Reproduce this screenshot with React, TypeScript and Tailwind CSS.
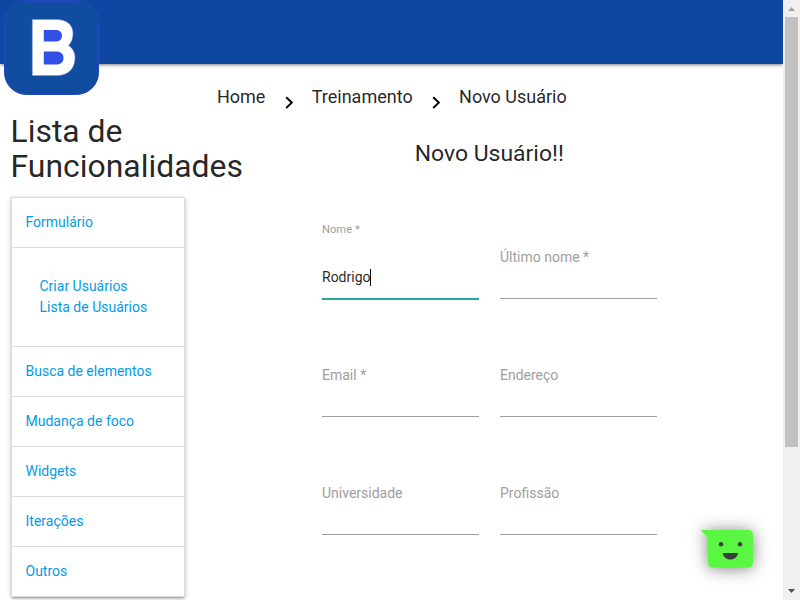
import React from 'react';

const crumbs = ['Home', 'Treinamento', 'Novo Usuário'];
const sections = ['Busca de elementos', 'Mudança de foco', 'Widgets', 'Iterações', 'Outros'];
const fields = ['Último nome *', 'Email *', 'Endereço', 'Universidade', 'Profissão'];

function Logo() {
  return (
    <svg className="absolute left-1 top-0 h-[95px] w-[95px]" viewBox="0 0 95 95">
      <rect x="0.5" y="0.5" width="94" height="94" rx="22" fill="#104ca0" stroke="#2048c4" />
      <path
        fill="#fff"
        stroke="#7f8ce8"
        strokeWidth="0.5"
        d="M28.300 19.500H52C63 19.500 69 25 69 33.500C69 39 67 43 64.500 45.500C68.500 48 71 52 71 57.500C71 69 64 75.500 53 75.500H28.300Z"
      />
      <path fill="#3150e4" d="M39.800 30H51C55.500 30 58 32 58 35.700C58 39.500 55.500 41.500 51 41.500H39.800Z M39.800 51.500H52C57 51.500 59.500 54 59.500 58C59.500 62 57 64.500 52 64.500H39.800Z" />
    </svg>
  );
}

function Header() {
  return (
    <header className="relative z-10 h-16 shrink-0 bg-[#0d47a1] shadow-[0_2px_2px_0_rgba(0,0,0,0.14),0_3px_1px_-2px_rgba(0,0,0,0.12),0_1px_5px_0_rgba(0,0,0,0.2)]">
      <Logo />
    </header>
  );
}

function Sidebar() {
  return (
    <aside className="w-[217px] shrink-0 pl-[10.500px] pt-[50px]">
      <h4 className="w-[240px] text-[31.920px] leading-[35.110px]">
        Lista de
        <br />
        Funcionalidades
      </h4>
      <ul className="mt-[13px] w-[174px] border border-b-0 border-[#ddd] bg-white leading-[21px] text-[#039be5] shadow-[0_2px_2px_0_rgba(0,0,0,0.14),0_3px_1px_-2px_rgba(0,0,0,0.12),0_1px_5px_0_rgba(0,0,0,0.2)]">
        <li className="h-[50px] border-b border-[#ddd] px-[14px] pt-[14px]">Formulário</li>
        <li className="h-[99px] border-b border-[#ddd] px-7 pt-7">
          <div>Criar Usuários</div>
          <div>Lista de Usuários</div>
        </li>
        {sections.map((name) => (
          <li key={name} className="h-[50px] border-b border-[#ddd] px-[14px] pt-[14px]">
            {name}
          </li>
        ))}
      </ul>
    </aside>
  );
}

function Breadcrumbs() {
  return (
    <nav className="-ml-[0.100px] flex h-[27px] items-center text-[18px] leading-[27px]">
      {crumbs.map((name, i) => (
        <React.Fragment key={name}>
          {i > 0 && (
            <svg className="ml-[19.800px] mr-[17.600px] mt-[12px] h-[13px] w-[9px]" viewBox="0 0 9 13" fill="none" stroke="#000" strokeWidth="2">
              <path d="M1.200 1.200L6.800 6.600L1.200 12" />
            </svg>
          )}
          <span>{name}</span>
        </React.Fragment>
      ))}
    </nav>
  );
}

function NameField() {
  return (
    <div className="h-[118px]">
      <div className="h-[21px] pt-px text-[11.200px] leading-[17px] text-[#9e9e9e]">Nome *</div>
      <div className="flex h-[59px] items-center border-b-2 border-[#26a69a] pt-[16px] text-[14px]">
        <span>Rodrigo</span>
        <span className="-ml-[0.600px] h-[17px] w-px bg-black" />
      </div>
    </div>
  );
}

function EmptyField({ label }: { label: string }) {
  return (
    <div className="h-[118px]">
      <div className="h-[79px] border-b border-[#9e9e9e] pt-[27px] leading-[21px] text-[#9e9e9e]">{label}</div>
    </div>
  );
}

function ChatBubble() {
  return (
    <svg
      className="absolute left-[701px] top-[529px] h-[40px] w-[53px] overflow-visible drop-shadow-[0_1px_8px_rgba(0,0,0,0.5)]"
      viewBox="0 0 53 40"
    >
      <path fill="#5af742" d="M-0.500 1H47C50 1 52 3 52 6V33.500C52 36.500 50 38.500 47 38.500H12C9 38.500 7 36.500 7 33.500V9Z" />
      <circle cx="20" cy="15.300" r="2.200" fill="#3c3c3c" />
      <circle cx="39" cy="15.300" r="2.200" fill="#3c3c3c" />
      <path fill="#3c3c3c" d="M21.800 24H37C36.600 28 33.500 30.500 29.400 30.500S22.200 28 21.800 24Z" />
    </svg>
  );
}

function Scrollbar() {
  return (
    <div className="flex w-[17px] shrink-0 flex-col items-center bg-[#f0f0f0]">
      <svg className="h-[17px] w-[17px] shrink-0" viewBox="0 0 17 17">
        <path fill="#a3a3a3" d="M8.500 7L12 11H5Z" />
      </svg>
      <div className="h-[430px] w-[13px] bg-[#c1c1c1]" />
      <svg className="mt-auto h-[17px] w-[17px] shrink-0" viewBox="0 0 17 17">
        <path fill="#505050" d="M5 6H12L8.500 10Z" />
      </svg>
    </div>
  );
}

export default function App() {
  return (
    <div className="flex h-[600px] w-[800px] overflow-hidden bg-white font-[Roboto,sans-serif] text-[14px] text-[rgba(0,0,0,0.87)]">
      <div className="relative flex w-[783px] shrink-0 flex-col overflow-hidden">
        <Header />
        <div className="flex">
          <Sidebar />
          <main className="flex-1 pt-[19px]">
            <Breadcrumbs />
            <h5 className="ml-[197.700px] mt-[31px] text-[22.960px] leading-[25px]">Novo Usuário!!</h5>
            <form className="ml-[105px] mt-[54px] grid grid-cols-[157px_157px] gap-x-[21px]">
              <NameField />
              {fields.map((label) => (
                <EmptyField key={label} label={label} />
              ))}
            </form>
          </main>
        </div>
        <ChatBubble />
      </div>
      <Scrollbar />
    </div>
  );
}
